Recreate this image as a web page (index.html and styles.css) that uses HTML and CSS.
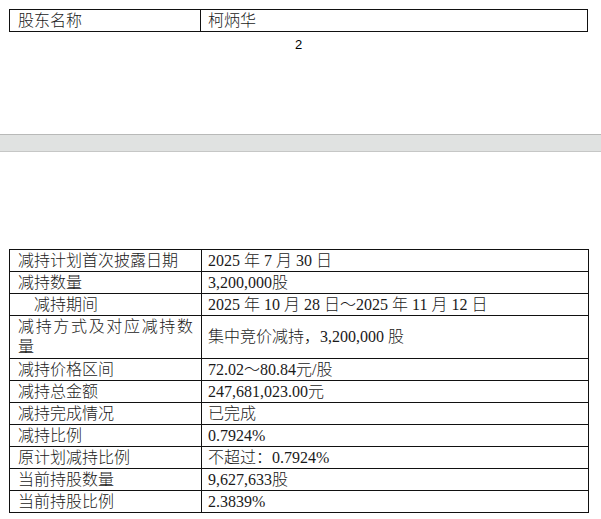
FILE: index.html
```html
<!DOCTYPE html>
<html lang="zh-CN">
<head>
<meta charset="utf-8">
<title>减持情况</title>
<link rel="stylesheet" href="styles.css">
</head>
<body>
<div class="page page-top">
  <div class="grid grid-top">
    <div class="cell label">股东名称</div>
    <div class="cell value">柯炳华</div>
  </div>
  <div class="page-num">2</div>
</div>
<div class="page-gap"></div>
<div class="page page-bottom">
  <div class="grid grid-bottom">
    <div class="cell label">减持计划首次披露日期</div>
    <div class="cell value">2025 年 7 月 30 日</div>
    <div class="cell label">减持数量</div>
    <div class="cell value">3,200,000股</div>
    <div class="cell label indent">减持期间</div>
    <div class="cell value">2025 年 10 月 28 日～2025 年 11 月 12 日</div>
    <div class="cell label tall">减持方式及对应减持数量</div>
    <div class="cell value tall">集中竞价减持，3,200,000 股</div>
    <div class="cell label">减持价格区间</div>
    <div class="cell value">72.02～80.84元/股</div>
    <div class="cell label">减持总金额</div>
    <div class="cell value">247,681,023.00元</div>
    <div class="cell label">减持完成情况</div>
    <div class="cell value">已完成</div>
    <div class="cell label">减持比例</div>
    <div class="cell value">0.7924%</div>
    <div class="cell label">原计划减持比例</div>
    <div class="cell value">不超过：0.7924%</div>
    <div class="cell label">当前持股数量</div>
    <div class="cell value">9,627,633股</div>
    <div class="cell label">当前持股比例</div>
    <div class="cell value">2.3839%</div>
  </div>
</div>
</body>
</html>
```

FILE: styles.css
```css
html, body {
  margin: 0;
  padding: 0;
  background: #fff;
}

body {
  font-family: "Liberation Serif", "Noto Sans CJK SC", serif;
  font-size: 16px;
  font-weight: 300;
  color: #1a1a1a;
}

.page {
  box-sizing: border-box;
}

.page-top {
  height: 134px;
  padding-top: 9px;
}

.page-gap {
  height: 16px;
  background: #e0e2e1;
  border-top: 1px solid #b8b9b8;
  border-bottom: 1px solid #c6c7c6;
}

.page-bottom {
  padding-top: 97px;
}

.grid {
  display: grid;
  gap: 1px;
  background: #111;
  border: 1px solid #111;
  margin-left: 9px;
}

.grid-top {
  width: 577px;
  grid-template-columns: 190px 1fr;
  grid-auto-rows: 21px;
}

.grid-bottom {
  width: 578px;
  grid-template-columns: 191px 1fr;
  grid-template-rows: 21px 21px 21px 42px repeat(7, 21px);
}

.cell {
  background: #fff;
  display: flex;
  align-items: center;
  line-height: 20px;
  white-space: nowrap;
}

.label {
  padding: 0 8px;
  white-space: normal;
  text-align: justify;
  text-align-last: left;
}

.value {
  padding: 0 6px;
}

.grid-top .value {
  padding-left: 7px;
}

.indent {
  padding-left: 24px;
}

.tall.label {
  align-items: flex-start;
  padding-top: 1px;
}

.page-num {
  margin-top: 5px;
  width: 579px;
  margin-left: 9px;
  text-align: center;
  font-family: "Liberation Sans", Arial, sans-serif;
  font-size: 13px;
  font-weight: 400;
  line-height: 16px;
  color: #000;
}
```
